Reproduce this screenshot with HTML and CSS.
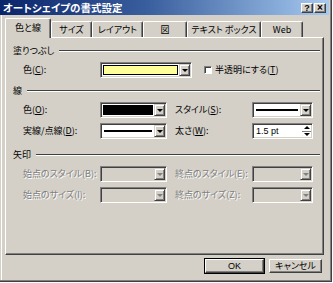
FILE: index.html
```html
<!DOCTYPE html>
<html lang="ja">
<head>
<meta charset="utf-8">
<title>オートシェイプの書式設定</title>
<link rel="stylesheet" href="styles.css">
</head>
<body>
<div class="window">
  <div class="titlebar">
    <span class="title">オートシェイプの書式設定</span>
    <div class="tbtns">
      <span class="tbtn">?</span>
      <span class="tbtn tbtn-x">×</span>
    </div>
  </div>
  <div class="main">
    <div class="tabs">
      <div class="tab tab-active w1">色と線</div>
      <div class="tab w2">サイズ</div>
      <div class="tab w3">レイアウト</div>
      <div class="tab w4">図</div>
      <div class="tab w5">テキスト ボックス</div>
      <div class="tab w6">Web</div>
    </div>
    <div class="panel">
      <div class="ghead g1"><span>塗りつぶし</span><i></i></div>
      <div class="row row-fill">
        <label class="lbl">色(<u>C</u>):</label>
        <div class="combo combo-wide"><div class="field"><span class="swatch swatch-yellow"></span></div><span class="dd"><b></b></span></div>
        <div class="check"><span class="cbox"></span><span>半透明にする(<u>T</u>)</span></div>
      </div>

      <div class="ghead g2"><span>線</span><i></i></div>
      <div class="row grid">
        <label class="lbl">色(<u>O</u>):</label>
        <div class="combo"><div class="field"><span class="swatch swatch-black"></span></div><span class="dd"><b></b></span></div>
        <span></span>
        <label class="lbl">スタイル(<u>S</u>):</label>
        <div class="combo"><div class="field"><span class="line"></span></div><span class="dd"><b></b></span></div>
      </div>
      <div class="row grid">
        <label class="lbl">実線/点線(<u>D</u>):</label>
        <div class="combo"><div class="field"><span class="line"></span></div><span class="dd"><b></b></span></div>
        <span></span>
        <label class="lbl">太さ(<u>W</u>):</label>
        <div class="combo spin"><div class="field"><span class="spintext">1.5 pt</span></div><span class="spinbtns"><span class="su"><b></b></span><span class="sd"><b></b></span></span></div>
      </div>

      <div class="ghead g3"><span>矢印</span><i></i></div>
      <div class="row grid disabled">
        <label class="lbl">始点のスタイル(B):</label>
        <div class="combo"><div class="field"></div><span class="dd"><b></b></span></div>
        <span></span>
        <label class="lbl">終点のスタイル(E):</label>
        <div class="combo"><div class="field"></div><span class="dd"><b></b></span></div>
      </div>
      <div class="row grid disabled">
        <label class="lbl">始点のサイズ(I):</label>
        <div class="combo"><div class="field"></div><span class="dd"><b></b></span></div>
        <span></span>
        <label class="lbl">終点のサイズ(Z):</label>
        <div class="combo"><div class="field"></div><span class="dd"><b></b></span></div>
      </div>
    </div>
    <div class="buttons">
      <div class="btn btn-default"><span>OK</span></div>
      <div class="btn btn-cancel"><span>キャンセル</span></div>
    </div>
  </div>
</div>
</body>
</html>
```

FILE: styles.css
```css
* { box-sizing: border-box; }
html, body { margin: 0; padding: 0; }
body {
  width: 333px; height: 283px; overflow: hidden;
  background: #ffffff;
  font-family: "Noto Sans CJK JP", "Noto Sans", sans-serif;
  font-size: 9px;
  font-feature-settings: "palt";
  color: #000;
}
.window {
  width: 332px; height: 282px;
  background: #D4D0C8;
  border-right: 1px solid #404040;
  border-bottom: 1px solid #404040;
  box-shadow: inset -1px -1px 0 #808080, inset 1px 0 0 #D4D0C8, inset 2px 0 0 #ffffff;
}
.titlebar {
  height: 15px;
  margin-right: 2px;
  background: linear-gradient(to right, #0A246A 0%, #3a5f9e 45%, #A6CAF0 100%);
  display: flex; align-items: center; justify-content: space-between;
  padding: 0 3px 0 3px;
}
.title { color: #fff; font-weight: bold; font-size: 10.5px; line-height: 13px; }
.tbtns { display: flex; gap: 1px; }
.tbtn {
  width: 12px; height: 10px;
  background: #D4D0C8;
  border: 1px solid; border-color: #fff #404040 #404040 #fff;
  box-shadow: inset -1px -1px 0 #808080;
  font-family: "Liberation Sans", sans-serif;
  font-weight: bold; font-size: 9px; line-height: 8px; text-align: center; color: #000;
}
.tbtn-x { font-size: 10px; }
.main { padding: 3px 0 0 5px; }
.tabs { display: flex; align-items: flex-end; height: 19px; position: relative; z-index: 1; }
.tab {
  height: 16px;
  border-top: 1px solid #fff; border-left: 1px solid #fff; border-right: 1px solid #404040;
  border-radius: 2px 2px 0 0;
  box-shadow: inset -1px 0 0 #808080;
  display: flex; align-items: center; justify-content: center;
  line-height: 12px;
}
.tab-active { height: 20px; margin-bottom: -1px; background: #D4D0C8; padding-bottom: 2px; }
.w1 { width: 46px; }
.w2 { width: 41px; }
.w3 { width: 51px; }
.w4 { width: 44px; }
.w5 { width: 74px; }
.w6 { width: 42px; }
.panel {
  width: 319px; height: 218px;
  border: 1px solid; border-color: #fff #404040 #404040 #fff;
  box-shadow: inset -1px -1px 0 #808080;
  padding: 0 3px 0 17px;
}
.ghead { display: flex; align-items: center; height: 12px; margin-left: -10px; line-height: 12px; }
.ghead i { flex: 1; height: 2px; margin-left: 5px; border-top: 1px solid #404040; border-bottom: 1px solid #fff; }
.g1 { margin-top: 7px; }
.g2 { margin-top: 7px; }
.g3 { margin-top: 10px; }
.row { height: 16px; margin-top: 5px; display: flex; align-items: center; }
.grid { display: grid; grid-template-columns: 77px 67px 8px 77px 61px; align-items: center; }
.lbl { line-height: 12px; white-space: nowrap; }
.row-fill .lbl { width: 77px; }
.combo {
  height: 16px;
  display: flex;
  border: 1px solid; border-color: #808080 #fff #fff #808080;
  box-shadow: inset 1px 1px 0 #404040, inset -1px -1px 0 #D4D0C8;
  background: #fff;
  padding: 1px;
}
.combo-wide { width: 92px; }
.field { flex: 1; display: flex; align-items: center; padding: 1px 1px 1px 1px; }
.swatch { flex: 1; height: 10px; border: 1px solid #000; }
.swatch-yellow { background: #FFFF99; }
.swatch-black { background: #000; }
.line { flex: 1; height: 2px; background: #000; margin: 0 1px 0 1px; }
.dd {
  width: 11px;
  background: #D4D0C8;
  border: 1px solid; border-color: #D4D0C8 #404040 #404040 #D4D0C8;
  box-shadow: inset 1px 1px 0 #fff, inset -1px -1px 0 #808080;
  display: flex; align-items: center; justify-content: center;
}
.dd b { width: 0; height: 0; border-left: 3px solid transparent; border-right: 3px solid transparent; border-top: 3px solid #000; margin-top: 1px; }
.check { display: flex; align-items: center; margin-left: 12px; line-height: 12px; }
.cbox {
  width: 8px; height: 8px; margin-right: 3px;
  background: #fff;
  border: 1px solid; border-color: #808080 #fff #fff #808080;
  box-shadow: inset 1px 1px 0 #404040;
}
.spin .field { padding-left: 2px; }
.spintext { line-height: 12px; font-family: "Liberation Sans", sans-serif; font-size: 9px; }
.spinbtns { width: 9px; display: flex; flex-direction: column; }
.su, .sd { flex: 1; display: flex; align-items: center; justify-content: center; }
.su { border-bottom: 1px solid #808080; }
.su b { width: 0; height: 0; border-left: 3px solid transparent; border-right: 3px solid transparent; border-bottom: 3px solid #000; }
.sd b { width: 0; height: 0; border-left: 3px solid transparent; border-right: 3px solid transparent; border-top: 3px solid #000; }
.disabled .lbl { color: #808080; text-shadow: 1px 1px 0 #fff; }
.disabled .combo { background: #D4D0C8; }
.disabled .dd b { border-top-color: #808080; }
.buttons { display: flex; justify-content: flex-end; gap: 5px; padding: 4px 9px 0 0; }
.btn {
  height: 14px;
  border: 1px solid; border-color: #fff #404040 #404040 #fff;
  box-shadow: inset -1px -1px 0 #808080;
  display: flex; align-items: center; justify-content: center;
  line-height: 12px;
}
.btn-default { width: 59px; outline: 1px solid #000; font-family: "Liberation Sans", sans-serif; }
.btn-cancel { width: 53px; }
```
